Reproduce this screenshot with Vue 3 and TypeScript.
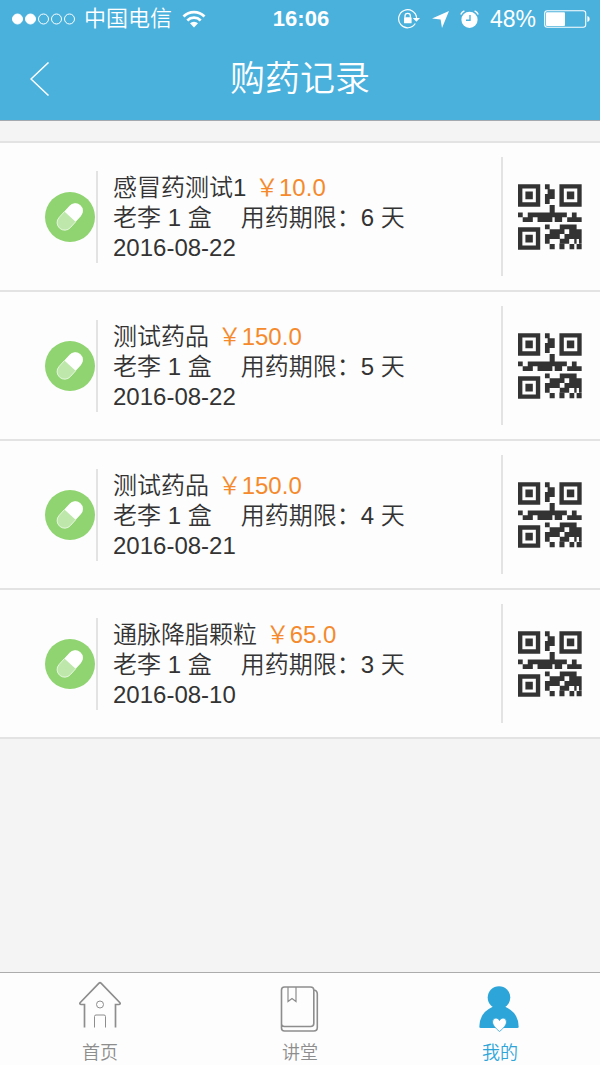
<script setup lang="ts">
interface PurchaseRecord {
  id: number
  name: string
  price: string
  patient: string
  boxes: number
  days: number
  date: string
}

interface Tab {
  key: 'home' | 'lecture' | 'mine'
  label: string
  active: boolean
}

const records: PurchaseRecord[] = [
  { id: 1, name: '感冒药测试1', price: '10.0', patient: '老李', boxes: 1, days: 6, date: '2016-08-22' },
  { id: 2, name: '测试药品', price: '150.0', patient: '老李', boxes: 1, days: 5, date: '2016-08-22' },
  { id: 3, name: '测试药品', price: '150.0', patient: '老李', boxes: 1, days: 4, date: '2016-08-21' },
  { id: 4, name: '通脉降脂颗粒', price: '65.0', patient: '老李', boxes: 1, days: 3, date: '2016-08-10' },
]

const tabs: Tab[] = [
  { key: 'home', label: '首页', active: false },
  { key: 'lecture', label: '讲堂', active: false },
  { key: 'mine', label: '我的', active: true },
]
</script>

<template>
  <div class="screen">
    <header class="top">
      <div class="status">
        <div class="status-left">
          <svg class="signal" width="64" height="12" viewBox="0 0 64 12">
            <g stroke="#fff" stroke-width="1">
              <circle cx="5.5" cy="6" r="5" fill="#fff" />
              <circle cx="18.5" cy="6" r="5" fill="#fff" />
              <circle cx="31.5" cy="6" r="5" fill="none" />
              <circle cx="44.5" cy="6" r="5" fill="none" />
              <circle cx="57.5" cy="6" r="5" fill="none" />
            </g>
          </svg>
          <span class="carrier">中国电信</span>
          <svg width="24" height="18" viewBox="0 0 24 18" fill="none" stroke="#fff" stroke-width="2.8">
            <path d="M1.5 6.5a15 15 0 0 1 21 0" />
            <path d="M5.3 10.4a9.7 9.7 0 0 1 13.4 0" />
            <path d="M12 17.5l-4-4.2a5.8 5.8 0 0 1 8 0z" fill="#fff" stroke="none" />
          </svg>
        </div>
        <span class="clock">16:06</span>
        <div class="status-right">
          <svg class="lock" width="23" height="20" viewBox="0 0 23 20" fill="none" stroke="#fff">
            <path d="M17.3 14.5A9 9 0 1 1 18.6 9" stroke-width="1.2" />
            <path d="M14.8 9h7.2l-3.6 3.8z" fill="#fff" stroke="none" />
            <path d="M7 8.5V7a2.7 2.7 0 0 1 5.4 0v1.5" stroke-width="1.3" />
            <rect x="6" y="8.3" width="7.6" height="6" rx=".6" fill="#fff" stroke="none" />
          </svg>
          <svg class="arrow" width="17" height="17" viewBox="0 0 17 17">
            <path d="M17 0L10 17 8.6 8.6 0 7.6z" fill="#fff" />
          </svg>
          <svg class="alarm" width="19" height="19" viewBox="0 0 19 19">
            <circle cx="9.5" cy="9.8" r="8.1" fill="#fff" />
            <path d="M.8 4.500A7 7 0 0 1 4.400.9M18.200 4.500a7 7 0 0 0-3.600-3.600" fill="none" stroke="#fff" stroke-width="1.5" />
            <path d="M10 5v5.200H6" fill="none" stroke="#4ab1dd" stroke-width="1.4" />
          </svg>
          <span class="percent">48%</span>
          <svg width="46" height="18" viewBox="0 0 46 18">
            <rect x=".7" y=".7" width="41" height="16.6" rx="2.5" fill="none" stroke="#fff" stroke-width="1.1" />
            <rect x="2" y="2.2" width="19" height="13.8" rx="1" fill="#fff" />
            <path d="M43.4 6q2.3.6 2.3 3t-2.3 3z" fill="#fff" />
          </svg>
        </div>
      </div>
      <div class="nav">
        <button class="back" type="button" aria-label="返回">
          <svg width="20" height="34" viewBox="0 0 20 34" fill="none" stroke="#fff" stroke-width="1.5">
            <path d="M18.500.500L1 17l17.500 16.500" />
          </svg>
        </button>
        <h1 class="title">购药记录</h1>
      </div>
    </header>

    <main class="content">
      <ul class="list">
        <li v-for="r in records" :key="r.id" class="row">
          <svg class="pill" width="50" height="50" viewBox="0 0 50 50">
            <circle cx="25" cy="25" r="25" fill="#8fd470" />
            <g transform="translate(25 24.700) rotate(-48)">
              <rect x="-15.500" y="-7.600" width="31" height="15.200" rx="7.600" fill="#bee8ab" />
              <path d="M0-7.600H-7.900A7.600 7.600 0 0 0-7.900 7.600H0" fill="none" stroke="#e6f6df" stroke-width=".9" />
              <path d="M0-7.600H7.900A7.600 7.600 0 0 1 7.900 7.600H0z" fill="#fff" />
            </g>
          </svg>
          <div class="info">
            <div class="line">{{ r.name }} <span class="price">￥{{ r.price }}</span></div>
            <div class="line">{{ r.patient }} {{ r.boxes }} 盒<span class="term">用药期限：{{ r.days }} 天</span></div>
            <div class="line">{{ r.date }}</div>
          </div>
          <button class="code" type="button" aria-label="二维码">
            <svg width="64" height="66" viewBox="0 0 190 195" fill="#333">
              <path fill-rule="evenodd" d="M0 0h66v67H0zM13 13v41h40V13zM22 22h22v23H22z" />
              <path fill-rule="evenodd" d="M123 0h66v67h-66zM136 13v41h40V13zM145 22h22v23h-22z" />
              <path fill-rule="evenodd" d="M0 128h66v67H0zM13 141v41h40v-41zM22 150h22v23H22z" />
              <path d="M80 0h14v15h15v29H94v15H80V29h8V15h-8zM94 62h15v22h36v14h-14v14h-22V98h-7v14H58V98H44v14H14V98h15V84h65zM0 84h14v14H0zM160 84h14v14h15v14h-43V98h14z" />
              <path fill-rule="evenodd" d="M80 120h14v14h30v-14h50v14h15v43h-8v-14h-7v14h-7v-14h-15v14h-28v-14H94v14H80v-29h14v-14H80zM138 134v14h14v-14zM124 148v14h14v-14z" />
              <path d="M94 178h15v15H94zM123 176h15v17h-15zM153 178h14v15h-14zM174 178h15v15h-15z" />
            </svg>
          </button>
        </li>
      </ul>
    </main>

    <nav class="tabs">
      <a v-for="t in tabs" :key="t.key" href="#" class="tab" :class="{ active: t.active }">
        <svg v-if="t.key === 'home'" width="44" height="50" viewBox="0 0 44 50" fill="none" stroke="#8d8d8d">
          <path d="M6.500 48.500V25.500H3q-2-.5-.7-2L21 4.200q1-.9 2 0l18.700 19.300q1.300 1.500-.7 2h-3.500v23" stroke-width="1.700" />
          <circle cx="22" cy="25.500" r="3.500" stroke-width="1" />
          <path d="M16.500 48.500V37.500q0-1.500 1.500-1.500h8q1.500 0 1.500 1.500v11" stroke-width="1" />
        </svg>
        <svg v-else-if="t.key === 'lecture'" width="44" height="50" viewBox="0 0 44 50" fill="none" stroke="#8d8d8d">
          <path d="M35.800 11q3.500.5 3.500 4v33.500q0 3.500-3.500 3.500H6.500q-3 0-3-3V11q0-3 3-3h26q3.300 0 3.300 3v33.500q0 3-3.300 3h-26q-3 0-3-2.500" stroke-width="1.600" />
          <path d="M10 8v14.500l4-3 4 3V8" stroke-width="1.200" />
        </svg>
        <svg v-else width="44" height="50" viewBox="0 0 44 50">
          <circle cx="21" cy="18.500" r="11.300" fill="#2ea5d9" />
          <path d="M1.300 48q0-14 13-20h13.400q13 6 13 20 0 1-1.500 1H2.800q-1.500 0-1.500-1z" fill="#2ea5d9" />
          <path d="M21.500 52.500q-7-5.500-7-9.500 0-4 3.500-4 2.500 0 3.500 2.500 1-2.500 3.500-2.500 3.500 0 3.500 4 0 4-7 9.500z" fill="#fff" stroke="#2ea5d9" stroke-width=".8" />
        </svg>
        <span>{{ t.label }}</span>
      </a>
    </nav>
  </div>
</template>

<style>
body {
  margin: 0;
  background: #f4f4f4;
}
</style>

<style scoped>
.screen {
  display: flex;
  flex-direction: column;
  min-height: 100vh;
  background: #f4f4f4;
  color: #333;
  font-family: "Liberation Sans", "Noto Sans CJK SC", sans-serif;
  font-weight: 350;
}

.top {
  background: #4ab1dd;
  color: #fff;
  border-bottom: 1px solid #a3a9ae;
}

.status {
  display: grid;
  grid-template-columns: 1fr auto 1fr;
  align-items: center;
  height: 38px;
  padding: 0 10px 0 12px;
}

.status-left,
.status-right {
  display: flex;
  align-items: center;
}

.status-right {
  justify-content: flex-end;
}

.carrier {
  margin: 0 10px 0 8px;
  font-size: 22px;
  line-height: 38px;
}

.clock {
  font-size: 22px;
  font-weight: 700;
}

.lock,
.arrow,
.alarm {
  margin-right: 11px;
}

.percent {
  margin-right: 8px;
  font-size: 23px;
}

.nav {
  display: grid;
  grid-template-columns: 60px 1fr 60px;
  align-items: center;
  height: 82px;
}

.back {
  display: flex;
  justify-content: flex-end;
  padding: 0 10px 0 0;
  border: 0;
  background: none;
}

.title {
  margin: 0;
  text-align: center;
  font-size: 35px;
  line-height: 80px;
  font-weight: 350;
}

.content {
  flex: 1;
}

.list {
  margin: 20px 0 0;
  padding: 0;
  list-style: none;
  background: #fdfdfd;
  border-top: 2px solid #e3e3e3;
}

.row {
  display: flex;
  align-items: center;
  padding: 14px 0 14px 45px;
  border-bottom: 2px solid #e3e3e3;
}

.pill {
  flex: none;
}

.info {
  flex: 1;
  margin-left: 1px;
  padding: 2px 0 0 15px;
  border-left: 2px solid #e3e3e3;
}

.line {
  font-size: 24px;
  line-height: 30px;
  white-space: nowrap;
}

.price {
  margin-left: 2px;
  color: #f58a2c;
}

.term {
  margin-left: 29px;
}

.code {
  display: flex;
  flex: none;
  align-items: center;
  height: 119px;
  padding: 0 18px 0 15px;
  border: 0;
  border-left: 2px solid #e3e3e3;
  background: none;
}

.tabs {
  display: flex;
  height: 92px;
  background: #fdfdfd;
  border-top: 1px solid #acacac;
}

.tab {
  display: flex;
  flex: 1;
  flex-direction: column;
  align-items: center;
  padding-top: 6px;
  color: #8d8d8d;
  font-size: 18px;
  line-height: 24px;
  text-decoration: none;
}

.tab svg {
  margin-bottom: 12px;
  overflow: visible;
}

.tab.active {
  color: #2ea5d9;
}
</style>
